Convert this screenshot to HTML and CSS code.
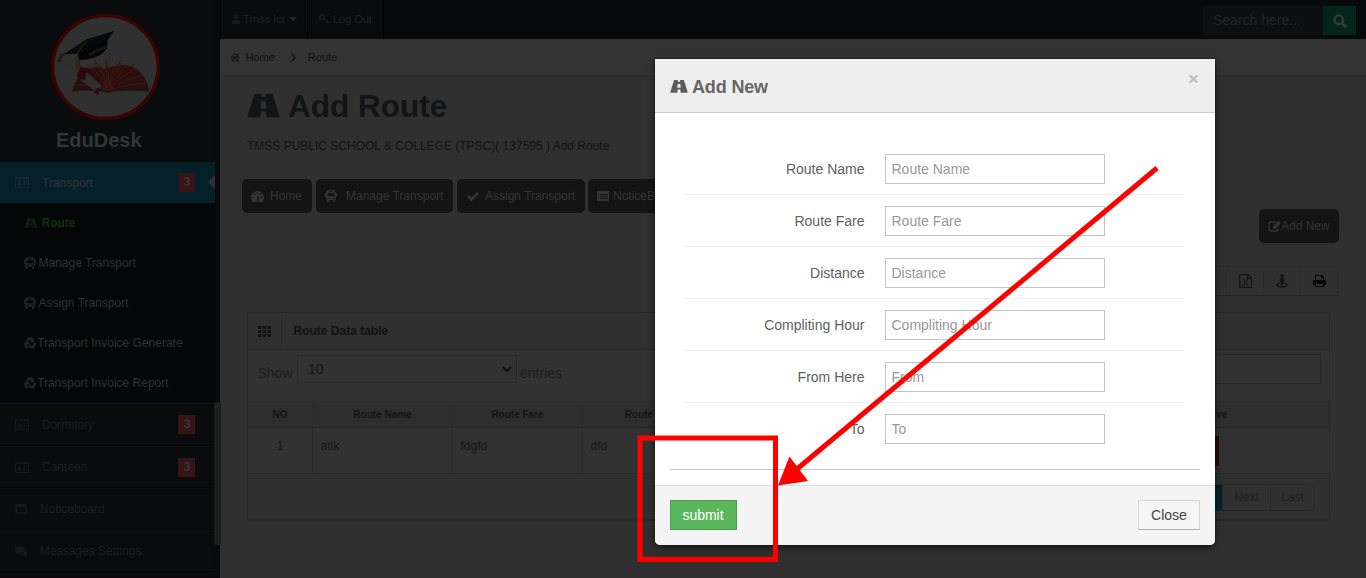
FILE: index.html
```html
<!DOCTYPE html>
<html lang="en">
<head>
<meta charset="utf-8">
<title>EduDesk - Add Route</title>
<link rel="stylesheet" href="styles.css">
</head>
<body>
<svg class="defs" width="0" height="0">
  <symbol id="road" viewBox="0 0 32 24"><path fill-rule="evenodd" d="M7 0h7l-.3 3h4.600L18 0h7l7 22q0 1.500-1 1.500H19l-.5-6h-5l-.5 6H1q-1 0-1-1.500zM13.500 7.500l-.5 7h6l-.5-7z"/></symbol>
  <symbol id="bus" viewBox="0 0 24 24"><path fill-rule="evenodd" d="M4 2Q5 0 12 0t8 2l2 4h2v7h-2v6h-2v5h-4v-4H8v4H4v-5H2v-6H0V6h2zM8 2.500v1.500h8V2.500zM5.500 6 4.500 12.500h15l-1-6.500zM5 15.500v2.500h3v-2.500zm11 0v2.500h3v-2.500z"/></symbol>
  <symbol id="card" viewBox="0 0 28 22"><path fill-rule="evenodd" d="M2 0h24q2 0 2 2v18q0 2-2 2H2q-2 0-2-2V2Q0 0 2 0zm0 4v16h24V4zm2 13q0-4 3-5-1-5 2-5t2 5q3 1 3 5zM16 8h8v2h-8zm0 5h8v2h-8z"/></symbol>
  <symbol id="recycle" viewBox="0 0 24 24"><g fill="none" stroke="currentColor" stroke-width="5.500"><path d="m6 8 4-5h4l3 5M20 12l1 4-3 4h-5M9 20H5l-2-4 2-5"/></g><path d="m20 2 1 9-9-2zM14 14v10l-5-5zM0 10l9-1 1 7z"/></symbol>
</svg>
<div class="app">
  <aside class="sidebar">
    <div class="brand">
      <svg class="logo" viewBox="0 0 110 108">
        <ellipse cx="54.500" cy="53" rx="52.800" ry="51.500" fill="#303030" stroke="#380300" stroke-width="3.500"/>
        <path d="M21 77q5-15 10-17 12-11 22-5 22-8 34 1 9 9 11 21-20-2-40 0-20-2-37 0z" fill="#2b0d0b"/>
        <g stroke="#38221f" stroke-width=".8" fill="none"><path d="M56 76Q50 58 33 49M56 76Q53 57 40 47M56 76Q53 57 47 45M56 76Q56 57 53 45M57 76Q58 57 59 45M57 76Q61 57 66 45M57 76Q64 57 73 46M57 76Q68 58 80 48M57 76Q70 61 87 54M57 76Q74 65 92 61M57 76Q76 70 95 69M56 76Q41 65 29 64M56 76Q39 70 25 71"/></g>
        <g stroke="#3a0f0d" stroke-width="1" fill="none"><path d="M57 75Q52 57 43 46M57 75Q55 57 56 45M57 75Q63 57 70 46M57 75Q68 60 84 50M57 75Q74 66 94 65"/></g>
        <path d="M21 77q18-3 36 1 20-4 41-1M52 77h8" stroke="#161711" stroke-width="1.500" fill="none"/>
        <path d="M8 41q3-4 8-2l35 33-6 6-17-13L8 48q-4-4 0-7z" fill="#302e28"/>
        <path d="m6 48 3-8 5-1-5 9z" fill="#211d16"/>
        <path d="m26 62 3-9 8 1 3 3-5 2-1 7-6-1zM46 74l-4 6 3-1 2 2 2-6z" fill="#2b0710"/>
        <path d="m13 40 23-15 27-8-10 14-29 9z" fill="#08090a"/>
        <path d="m27 39 24-9 6-8-1 12q-6 11-28 12z" fill="#050505"/>
        <path d="m38 41 9-5 8-3" stroke="#151515" stroke-width="3" fill="none"/>
        <path d="M36 27q-13 11-10 25" stroke="#2e250e" fill="none"/><path d="m24 47 5-1 1 7-5 2z" fill="#2e250e"/>
      </svg>
      <div class="brand-name">EduDesk</div>
    </div>
    <div class="nav-row active"><svg class="ic card"><use href="#card"/></svg><span>Transport</span><b class="badge">3</b><i class="pointer"></i></div>
    <div class="submenu">
      <div class="sub current"><svg class="ic s-road"><use href="#road"/></svg><span>Route</span></div>
      <div class="sub"><svg class="ic s-bus"><use href="#bus"/></svg><span>Manage Transport</span></div>
      <div class="sub"><svg class="ic s-bus"><use href="#bus"/></svg><span>Assign Transport</span></div>
      <div class="sub tight"><svg class="ic s-bus"><use href="#recycle"/></svg><span>Transport Invoice Generate</span></div>
      <div class="sub tight"><svg class="ic s-bus"><use href="#recycle"/></svg><span>Transport Invoice Report</span></div>
    </div>
    <div class="nav-row first"><svg class="ic card"><use href="#card"/></svg><span>Dormitory</span><b class="badge">3</b></div>
    <div class="nav-row"><svg class="ic card"><use href="#card"/></svg><span>Canteen</span><b class="badge">3</b></div>
    <div class="nav-row plain"><svg class="ic" width="12" height="10" viewBox="0 0 12 10"><path fill-rule="evenodd" d="M1 0h10q1 0 1 1v8q0 1-1 1H1Q0 10 0 9V1Q0 0 1 0zm1 3v5h8V3z"/></svg><span>Noticeboard</span></div>
    <div class="nav-row plain"><svg class="ic" width="12" height="11" viewBox="0 0 12 11"><ellipse cx="4.500" cy="4" rx="4.500" ry="3.700"/><path d="m2 6-1 3 4-2zM10 3q2 2 2 4t-1 2l.8 1.800L9 10q-3 0-4-1.500Q10 8 10 3z"/></svg><span>Messages Settings</span></div>
    <i class="thumb"></i>
  </aside>
  <main class="main">
    <header class="topbar">
      <div class="user"><svg class="ic" width="8" height="9" viewBox="0 0 8 9"><circle cx="4" cy="2.300" r="2.200"/><path d="M0 9V6q1-2 4-1 3-1 4 1v3z"/></svg><span>Tmss Ict</span><i class="caret"></i></div>
      <div class="logout"><svg class="ic" width="11" height="10" viewBox="0 0 11 10"><g fill="none" stroke="currentColor" stroke-width="1.500"><circle cx="3" cy="3" r="2.200"/><path d="m4.500 4.500 5.500 5M7.500 7.500 9 6"/></g></svg><span>Log Out</span></div>
      <div class="search"><span>Search here...</span><div class="go"><svg width="14" height="14" viewBox="0 0 14 14"><circle cx="5.800" cy="5.800" r="4.300" fill="none" stroke="#363a38" stroke-width="2.400"/><path d="m9 9 4 4" stroke="#363a38" stroke-width="2.800"/></svg></div></div>
    </header>
    <div class="crumbs"><svg class="ic" width="10" height="9" viewBox="0 0 10 9"><path d="m0 4.500 5-4.500 2 1.600V.5h1.500v2.300l1.500 1.700-.7.700L5 1.700.7 5.200zM1.500 5.300 5 2.500l3.500 2.800V9H6V6H4v3H1.500z"/></svg><span>Home</span><svg class="chev" width="6" height="11" viewBox="0 0 6 11"><path d="m1 1 4 4.500L1 10" fill="none" stroke="#171717" stroke-width="1.500"/></svg><span>Route</span></div>
    <section class="page">
      <h1><svg class="ic h-road"><use href="#road"/></svg><span>Add Route</span></h1>
      <p class="school">TMSS PUBLIC SCHOOL &amp; COLLEGE (TPSC)( 137595 ) Add Route</p>
      <div class="buttons">
        <div class="btn home"><svg class="ic" width="13" height="11" viewBox="0 0 13 11"><path d="M6.500 0A6.500 6.500 0 0 1 13 6.500Q13 9 11.500 11h-10Q0 9 0 6.500A6.500 6.500 0 0 1 6.500 0z"/><g fill="#141414"><circle cx="2.200" cy="6.500" r=".8"/><circle cx="3.500" cy="3.300" r=".8"/><circle cx="6.500" cy="2" r=".8"/><circle cx="9.500" cy="3.300" r=".8"/><circle cx="10.800" cy="6.500" r=".8"/><path d="m6 8 1-4 .8.300L7.500 8q.8 1.500-1 2-1.600-.8-.5-2z"/></g></svg><span>Home</span></div>
        <div class="btn manage"><svg class="ic b-bus"><use href="#bus"/></svg><span>Manage Transport</span></div>
        <div class="btn assign"><svg class="ic" width="12" height="9" viewBox="0 0 12 9"><path d="m1 4 3.500 3.500L11 1" fill="none" stroke="currentColor" stroke-width="2.600"/></svg><span>Assign Transport</span></div>
        <div class="btn notice"><svg class="ic" width="12" height="10" viewBox="0 0 12 10"><path fill-rule="evenodd" d="M0 0h12v10H0zm1 3v1h1V3zm2 0v1h8V3zM1 5v1h1V5zm2 0v1h8V5zM1 7v1h1V7zm2 0v1h8V7z"/></svg><span>NoticeBoard</span></div>
      </div>
      <div class="add-line"><div class="btn add"><svg class="ic" width="13" height="11" viewBox="0 0 13 11"><path d="M8 1H3Q1 1 1 3v5q0 2 2 2h5q2 0 2-2V7" fill="none" stroke="currentColor" stroke-width="1.400"/><path d="m5 5 5.500-5L13 2.300 7.500 8H5z"/></svg><span>Add New</span></div></div>
      <div class="tools">
        <div class="tool blank"></div>
        <div class="tool"><svg width="13" height="14" viewBox="0 0 13 14"><path d="M.7.700H9L12.300 4v9.300H.7zM8.500.700V4.500h3.800" fill="none" stroke="#151515" stroke-width="1.200"/><path d="M3.500 5.500h2M7.500 5.500h2M3.500 11h2M7.500 11h2M4.500 5.500l4 5.500M8.500 5.500l-4 5.500" stroke="#151515" fill="none"/></svg></div>
        <div class="tool"><svg width="12" height="14" viewBox="0 0 12 14"><circle cx="6" cy="1.700" r="1.700"/><path d="M3.700 3.500h4.600V8h-.8v3h-3V8h-.8z"/><path d="M3.500 9Q1 9.500 1 11q1 2 5 2t5-2q0-1.500-2.500-2" fill="none" stroke="#151515" stroke-width="1.300"/></svg></div>
        <div class="tool dark"><svg width="13" height="12" viewBox="0 0 13 12"><path fill-rule="evenodd" d="M2 0h7l2 2v3h1q1 0 1 1v4h-2v2H2v-2H0V6q0-1 1-1h1zm1 1v4h7V3H8V1zm0 8v2h7V9z"/></svg></div>
      </div>
      <div class="widget">
        <div class="widget-head"><div class="grid-ic"><svg width="13" height="11" viewBox="0 0 13 11"><path d="M0 0h3.500v3H0zm4.700 0h3.500v3H4.700zm4.800 0H13v3H9.500zM0 4h3.500v3H0zm4.700 0h3.500v3H4.700zm4.800 0H13v3H9.500zM0 8h3.500v3H0zm4.700 0h3.500v3H4.700zm4.800 0H13v3H9.500z"/></svg></div><b>Route Data table</b></div>
        <div class="filter"><span class="show">Show</span><div class="select"><span>10</span><svg width="10" height="7" viewBox="0 0 10 7"><path d="m1 1 4 4 4-4" fill="none" stroke="#111" stroke-width="2"/></svg></div><span class="show">entries</span><div class="find"></div></div>
        <div class="row head"><b>NO</b><b>Route Name</b><b>Route Fare</b><b>Route</b><b class="active-col">Active</b></div>
        <div class="row body"><span>1</span><span>atik</span><span>fdgfd</span><span>dfd</span><div class="del-cell"><i class="del"></i></div></div>
        <div class="pager"><i class="page-on"></i><span class="next">Next</span><span class="last">Last</span></div>
      </div>
    </section>
  </main>
</div>

<div class="modal">
  <div class="modal-head"><svg class="ic m-road"><use href="#road"/></svg><span>Add New</span><svg class="x" width="9" height="8" viewBox="0 0 9 8"><path d="m.8.500 7.400 7M8.200.500l-7.400 7" stroke="#bebebe" stroke-width="2.300"/></svg></div>
  <div class="modal-body">
    <div class="field"><label>Route Name</label><input placeholder="Route Name"></div>
    <div class="field"><label>Route Fare</label><input placeholder="Route Fare"></div>
    <div class="field"><label>Distance</label><input placeholder="Distance"></div>
    <div class="field"><label>Compliting Hour</label><input placeholder="Compliting Hour"></div>
    <div class="field"><label>From Here</label><input placeholder="From"></div>
    <div class="field"><label>To</label><input placeholder="To"></div>
  </div>
  <div class="modal-foot"><div class="submit">submit</div><div class="close">Close</div></div>
</div>

<svg class="marks" width="1366" height="578" viewBox="0 0 1366 578"><g fill="none" stroke="#f00" stroke-width="5"><path d="M640 438h135.500v121.500H640z"/><path d="M1157 168 797 469"/></g><path d="m778 485.500 11.500-29L808 481z" fill="#f00"/></svg>
</body>
</html>
```
FILE: styles.css
```css
* { box-sizing: border-box; }
body { margin: 0; width: 1366px; height: 578px; overflow: hidden; position: relative; background: #303030; font: 12px/16px "Liberation Sans", Arial, sans-serif; }
.defs { position: absolute; }
.ic { fill: currentColor; flex: none; }
.app { display: flex; height: 578px; }
.sidebar { width: 220px; flex: none; background: #090b0d; position: relative; border-right: 5px solid #08090a; border-bottom: 1px solid #0c0507; }
.brand { height: 162px; padding: 14px 0 0 51px; border-bottom: 1px solid #07090b; }
.logo { display: block; width: 110px; height: 108px; }
.brand-name { margin: 7px 0 0 5px; font: bold 20px/22px "Liberation Sans", Arial, sans-serif; color: #343536; }
.nav-row { height: 42px; display: flex; align-items: center; padding: 0 20px 0 15px; color: #1c1e20; border-bottom: 1px solid #050607; border-top: 1px solid #0c0e10; position: relative; }
.nav-row span { margin-left: 13px; }
.nav-row.plain span { margin-left: 13px; }
.card { width: 14px; height: 11px; color: #15181a; }
.nav-row .ic { color: #15181a; }
.nav-row.active { height: 41px; background: #06202a; color: #303436; border: 0; }
.nav-row.active .ic { color: #162a31; }
.nav-row.first { height: 43px; border-top: 1px solid #071d25; }
.badge { width: 17px; height: 19px; margin-left: auto; background: #371516; color: #383838; line-height: 19px; text-align: center; padding-left: 1px; }
.pointer { position: absolute; right: 0; top: 13px; border: 7.500px solid transparent; border-left: 0; border-right: 7px solid #303030; }
.submenu { background: #050607; height: 200px; }
.sub { height: 40px; display: flex; align-items: center; padding-left: 24px; color: #303131; }
.sub .ic { color: #222424; }
.sub span { margin-left: 2.500px; }
.sub.tight span { margin-left: 1px; }
.s-bus { width: 12px; height: 12px; }
.s-road { width: 14px; height: 10px; }
.sub.current { color: #0a330a; font-weight: bold; }
.sub.current span { margin-left: 3.500px; }
.sub.current .ic { color: #071f08; }
.thumb { position: absolute; left: 214px; top: 402px; width: 7px; height: 143px; background: #1f2020; border: 1px solid #191b1c; }
.main { flex: 1; min-width: 0; }
.topbar { height: 39px; background: #08090b; display: flex; font-size: 11px; color: #232425; border-left: 1px solid #030304; }
.topbar .ic { color: #191b1c; margin-right: 3px; }
.user { width: 87px; padding: 0 0 1px 11px; display: flex; align-items: center; background: #090b0d; border-right: 1px solid #030304; }
.caret { margin-left: 4px; border: 4px solid transparent; border-top-color: #252627; border-bottom: 0; }
.logout { width: 76px; padding: 0 0 1px 11px; display: flex; align-items: center; background: #090b0d; border-right: 1px solid #030304; }
.search { width: 153px; height: 29px; margin: 6px 10px 0 auto; background: #0d0f10; display: flex; align-items: center; font-size: 14px; color: #232425; }
.search > span { padding: 0 0 1px 10px; flex: 1; white-space: nowrap; }
.go { width: 33px; height: 29px; background: #04261a; display: flex; align-items: center; justify-content: center; }
.crumbs { height: 37px; background: #333; border-bottom: 1px solid #2e2e2e; display: flex; align-items: center; padding-left: 10px; font-size: 11px; color: #121212; }
.crumbs .ic { color: #1b1b1b; margin-right: 5.500px; }
.chev { margin: 0 12px 0 15px; }
.page { padding: 14px 36px 0 27px; color: #111; }
h1 { margin: 0; height: 32px; display: flex; align-items: center; font: bold 31.500px/32px "Liberation Sans", Arial, sans-serif; color: #131415; }
.h-road { width: 33px; height: 24px; margin-right: 8px; }
.school { margin: 16px 0 0; height: 16px; color: #131313; }
.buttons { display: flex; gap: 4px; margin: 25px 0 0 -5px; height: 30px; }
.btn { height: 34px; background: #141414; color: #343434; border-radius: 5px; display: flex; align-items: center; padding-left: 9px; flex: none; white-space: nowrap; }
.home { width: 70px; } .home span { margin-left: 6px; }
.manage { width: 137px; } .manage span { margin-left: 9px; }
.b-bus { width: 12px; height: 12px; }
.assign { width: 128px; padding-left: 10px; } .assign span { margin-left: 6px; }
.notice { width: 107px; margin-left: -1px; } .notice span { margin-left: 4px; }
.add-line { display: flex; justify-content: flex-end; margin-right: -9px; }
.add { width: 80px; } .add span { margin-left: 0; }
.tools { height: 30px; margin: 23px -9px 0 0; display: flex; justify-content: flex-end; fill: #151515; }
.tool { width: 37px; border: 1px solid #2b2b2b; border-right: 0; border-bottom-color: #252525; display: flex; align-items: center; justify-content: center; }
.tool.blank { width: 100px; }
.tool.dark { width: 39px; border-right: 1px solid #2b2b2b; fill: #050505; }
.widget { height: 209px; margin-top: 16px; border: 1px solid #292929; border-bottom-width: 2px; background: #323232; }
.widget-head { height: 37px; background: #303030; border-bottom: 1px solid #292929; display: flex; align-items: center; color: #121212; }
.grid-ic { width: 34px; height: 36px; border-right: 1px solid #2b2b2b; display: flex; align-items: center; justify-content: center; fill: #131313; }
.widget-head b { margin-left: 11.500px; }
.filter { height: 51px; display: flex; padding: 4px 8px 0 9.500px; font-size: 14px; color: #1e1e1e; }
.show { padding-top: 11px; }
.select { width: 220px; height: 28px; margin: 1px 3px 0 4.500px; border: 1px solid #292929; display: flex; align-items: center; justify-content: space-between; padding: 0 4px 0 10px; color: #141414; }
.find { margin-left: auto; width: 200px; height: 30px; border: 1px solid #292929; }
.row { display: grid; grid-template-columns: 65px 140px 130px 130px 1fr; }
.row > * { border-right: 1px solid #2b2b2b; }
.row > :last-child { border-right: 0; }
.head { height: 27px; background: #2e2e2e; border-bottom: 1px solid #292929; color: #141414; font-size: 10px; line-height: 27px; text-align: center; }
.head .active-col { text-align: right; padding-right: 102px; }
.head :nth-child(4) { padding-right: 17px; }
.body { height: 46px; border-bottom: 1px solid #292929; line-height: 36px; color: #151515; }
.body span { padding-left: 7.500px; }
.body span:first-child { padding: 0; text-align: center; }
.del-cell { display: flex; justify-content: flex-end; padding: 8px 110px 0 0; }
.del { width: 30px; height: 30px; background: #2a0b0c; }
.pager { height: 45px; background: #303030; display: flex; justify-content: flex-end; padding: 10px 14px 0 0; line-height: 24px; color: #202020; text-align: center; }
.pager > * { height: 27px; border: 1px solid #292929; border-bottom-color: #252525; }
.page-on { width: 30px; background: #06222b; }
.pager .next { width: 48px; border-left: 0; }
.pager .last { width: 44px; border-left: 0; border-radius: 0 4px 4px 0; }
.modal { position: absolute; left: 655px; top: 59px; width: 560px; height: 486px; background: #fff; border-radius: 0 0 5px 5px; box-shadow: 0 3px 7px rgba(0,0,0,.5), 0 0 2px #111; font-size: 14px; color: #555; }
.modal-head { height: 54px; background: #eee; border-bottom: 1px solid #ccc; display: flex; align-items: center; padding: 2px 17px 0 15px; font: bold 18px/20px "Liberation Sans", Arial, sans-serif; color: #666; }
.modal-head span { letter-spacing: -.15px; }
.m-road { width: 18px; height: 13px; margin-right: 4px; color: #5c5c5c; }
.x { margin: -15px 0 0 auto; }
.modal-body { height: 357px; margin: 0 15px; padding: 30px 15px 0; border-bottom: 1px solid #c8c8c8; }
.field { height: 52px; padding-top: 11px; display: flex; border-bottom: 1px solid #eee; }
.field:last-child { border: 0; }
.field label { width: 180px; text-align: right; line-height: 30px; color: #606060; padding-right: .5px; }
.field input { width: 220px; height: 30px; margin: 0 0 0 20px; border: 1px solid #c4c4c4; padding: 0 5.500px; font: 14px "Liberation Sans", Arial, sans-serif; background: #fff; }
.field input::placeholder { color: #999; opacity: 1; }
.modal-foot { height: 60px; margin-top: 15px; background: #f4f4f4; border-top: 1px solid #ddd; border-radius: 0 0 5px 5px; padding: 14px 15px; display: flex; justify-content: space-between; line-height: 28px; text-align: center; }
.submit { width: 67px; height: 30px; color: #fff; background: #5bb75b; border: 1px solid #4a9f4a; padding-right: 1px; }
.close { width: 62px; height: 30px; color: #444; border: 1px solid #d4d4d4; border-bottom-color: #b3b3b3; background: #f5f5f5; }
.marks { position: absolute; left: 0; top: 0; }
```
